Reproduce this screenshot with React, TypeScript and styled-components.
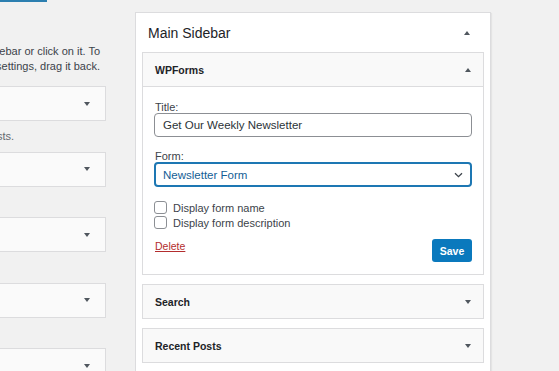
import React from 'react';
import styled, { createGlobalStyle } from 'styled-components';

const GlobalStyle = createGlobalStyle`
  html, body {
    margin: 0;
    padding: 0;
    background: #f1f1f1;
  }
  body {
    font-family: "Liberation Sans", Arial, sans-serif;
    color: #3c434a;
  }
`;

const available = ['Your site’s most recent Posts.', '', '', '', ''];

export default function App() {
  return (
    <Root>
      <GlobalStyle />
      <LeftColumn>
        <ButtonEdge />
        <Intro>
          To activate a widget drag it to a sidebar or click on it. To
          <br />
          deactivate a widget and delete its settings, drag it back.
        </Intro>
        {available.map((desc, i) => (
          <AvailableItem key={i}>
            <AvailableBox>
              <Caret />
            </AvailableBox>
            <Description>
              <span>{desc}</span>
            </Description>
          </AvailableItem>
        ))}
      </LeftColumn>

      <Sidebar>
        <SidebarHeader>
          <SidebarTitle>Main Sidebar</SidebarTitle>
          <Caret $up />
        </SidebarHeader>

        <Widgets>
          <Widget>
            <WidgetHeader $open>
              <WidgetTitle>WPForms</WidgetTitle>
              <Caret $up />
            </WidgetHeader>
            <WidgetBody>
              <Field>
                <Label>Title:</Label>
                <TextInput>Get Our Weekly Newsletter</TextInput>
              </Field>
              <Field>
                <Label>Form:</Label>
                <Select>
                  <span>Newsletter Form</span>
                  <svg width="9" height="6" viewBox="0 0 9 6" fill="none">
                    <path d="M1 1.2l3.5 3.5 3.5-3.5" stroke="#3c434a" strokeWidth="1.3" />
                  </svg>
                </Select>
              </Field>
              <Checks>
                <CheckRow>
                  <Checkbox />
                  Display form name
                </CheckRow>
                <CheckRow>
                  <Checkbox />
                  Display form description
                </CheckRow>
              </Checks>
              <Actions>
                <DeleteLink>Delete</DeleteLink>
                <SaveButton>Save</SaveButton>
              </Actions>
            </WidgetBody>
          </Widget>

          <Widget>
            <WidgetHeader>
              <WidgetTitle>Search</WidgetTitle>
              <Caret />
            </WidgetHeader>
          </Widget>

          <Widget>
            <WidgetHeader>
              <WidgetTitle>Recent Posts</WidgetTitle>
              <Caret />
            </WidgetHeader>
          </Widget>
        </Widgets>
      </Sidebar>
    </Root>
  );
}

const Root = styled.div`
  width: 559px;
  height: 371px;
  overflow: hidden;
  display: flex;
  align-items: flex-start;
`;

const LeftColumn = styled.div`
  flex: none;
  width: 106px;
  display: flex;
  flex-direction: column;
  align-items: flex-end;
`;

const ButtonEdge = styled.div`
  align-self: flex-start;
  width: 47px;
  height: 2px;
  background: #2c7fb0;
`;

const Intro = styled.p`
  margin: 42px 6px 0 0;
  white-space: nowrap;
  text-align: right;
  font-size: 11px;
  line-height: 15px;
  color: #3c434a;
`;

const AvailableItem = styled.div`
  width: 100%;
  margin-top: 12px;
  & + & {
    margin-top: 0;
  }
`;

const AvailableBox = styled.div`
  box-sizing: border-box;
  height: 35px;
  display: flex;
  align-items: center;
  justify-content: flex-end;
  padding-right: 15px;
  background: #fafafa;
  border: 1px solid #dcdcde;
  border-left: 0;
`;

const Description = styled.div`
  height: 30.5px;
  box-sizing: border-box;
  display: flex;
  justify-content: flex-end;
  padding: 8px 92px 0 0;
  white-space: nowrap;
  font-size: 11px;
  line-height: 15px;
  color: #646970;
`;

const Caret = styled.span<{ $up?: boolean }>`
  flex: none;
  width: 0;
  height: 0;
  border-left: 3.5px solid transparent;
  border-right: 3.5px solid transparent;
  ${(p) => (p.$up ? 'border-bottom: 4px solid #50575e;' : 'border-top: 4px solid #50575e;')}
`;

const Sidebar = styled.div`
  flex: none;
  box-sizing: border-box;
  width: 356px;
  height: 380px;
  margin: 12px 0 0 29px;
  background: #fff;
  border: 1px solid #dcdcde;
  box-shadow: 1px 1px 1px rgba(0, 0, 0, 0.05);
`;

const SidebarHeader = styled.div`
  height: 39px;
  display: flex;
  align-items: center;
  justify-content: space-between;
  padding: 0 20px 0 12px;
`;

const SidebarTitle = styled.h2`
  margin: 0;
  font-size: 14px;
  font-weight: 400;
  color: #1d2327;
`;

const Widgets = styled.div`
  display: flex;
  flex-direction: column;
  gap: 9px;
  padding: 0 6px;
`;

const Widget = styled.div`
  border: 1px solid #dcdcde;
  background: #fff;
`;

const WidgetHeader = styled.div<{ $open?: boolean }>`
  height: 33px;
  display: flex;
  align-items: center;
  justify-content: space-between;
  padding: 0 12px;
  background: #f9f9f9;
  border-bottom: ${(p) => (p.$open ? '1px solid #dcdcde' : '0')};
`;

const WidgetTitle = styled.h3`
  margin: 0;
  font-size: 10.5px;
  font-weight: 700;
  color: #1d2327;
`;

const WidgetBody = styled.div`
  padding: 15px 11px 12px;
  display: flex;
  flex-direction: column;
`;

const Field = styled.div`
  display: flex;
  flex-direction: column;
  margin-bottom: 14px;
`;

const Label = styled.label`
  font-size: 11px;
  line-height: 11px;
  color: #3c434a;
  padding-left: 1px;
`;

const TextInput = styled.div`
  box-sizing: border-box;
  height: 24px;
  display: flex;
  align-items: center;
  padding: 0 8px;
  border: 1px solid #8c8f94;
  border-radius: 4px;
  font-size: 11.5px;
  color: #2c3338;
`;

const Select = styled.div`
  box-sizing: border-box;
  height: 25px;
  display: flex;
  align-items: center;
  justify-content: space-between;
  padding: 0 7px;
  border: 2px solid #1d77b3;
  border-radius: 4px;
  font-size: 11.5px;
  color: #135e96;
`;

const Checks = styled.div`
  display: flex;
  flex-direction: column;
  gap: 2px;
`;

const CheckRow = styled.label`
  display: flex;
  align-items: center;
  gap: 6px;
  height: 13px;
  font-size: 11px;
  color: #3c434a;
`;

const Checkbox = styled.span`
  box-sizing: border-box;
  width: 13px;
  height: 13px;
  border: 1px solid #8c8f94;
  border-radius: 3px;
  background: #fff;
`;

const Actions = styled.div`
  display: flex;
  align-items: flex-start;
  justify-content: space-between;
  margin-top: 10px;
`;

const DeleteLink = styled.a`
  font-size: 10.5px;
  line-height: 13px;
  padding: 1px 0 0 1px;
  color: #b32d2e;
  text-decoration: underline;
`;

const SaveButton = styled.button`
  box-sizing: border-box;
  height: 23px;
  width: 40px;
  padding: 0;
  border: 0;
  border-radius: 3px;
  background: #0a79bd;
  color: #fff;
  font-family: inherit;
  font-size: 10.5px;
  font-weight: 700;
`;
